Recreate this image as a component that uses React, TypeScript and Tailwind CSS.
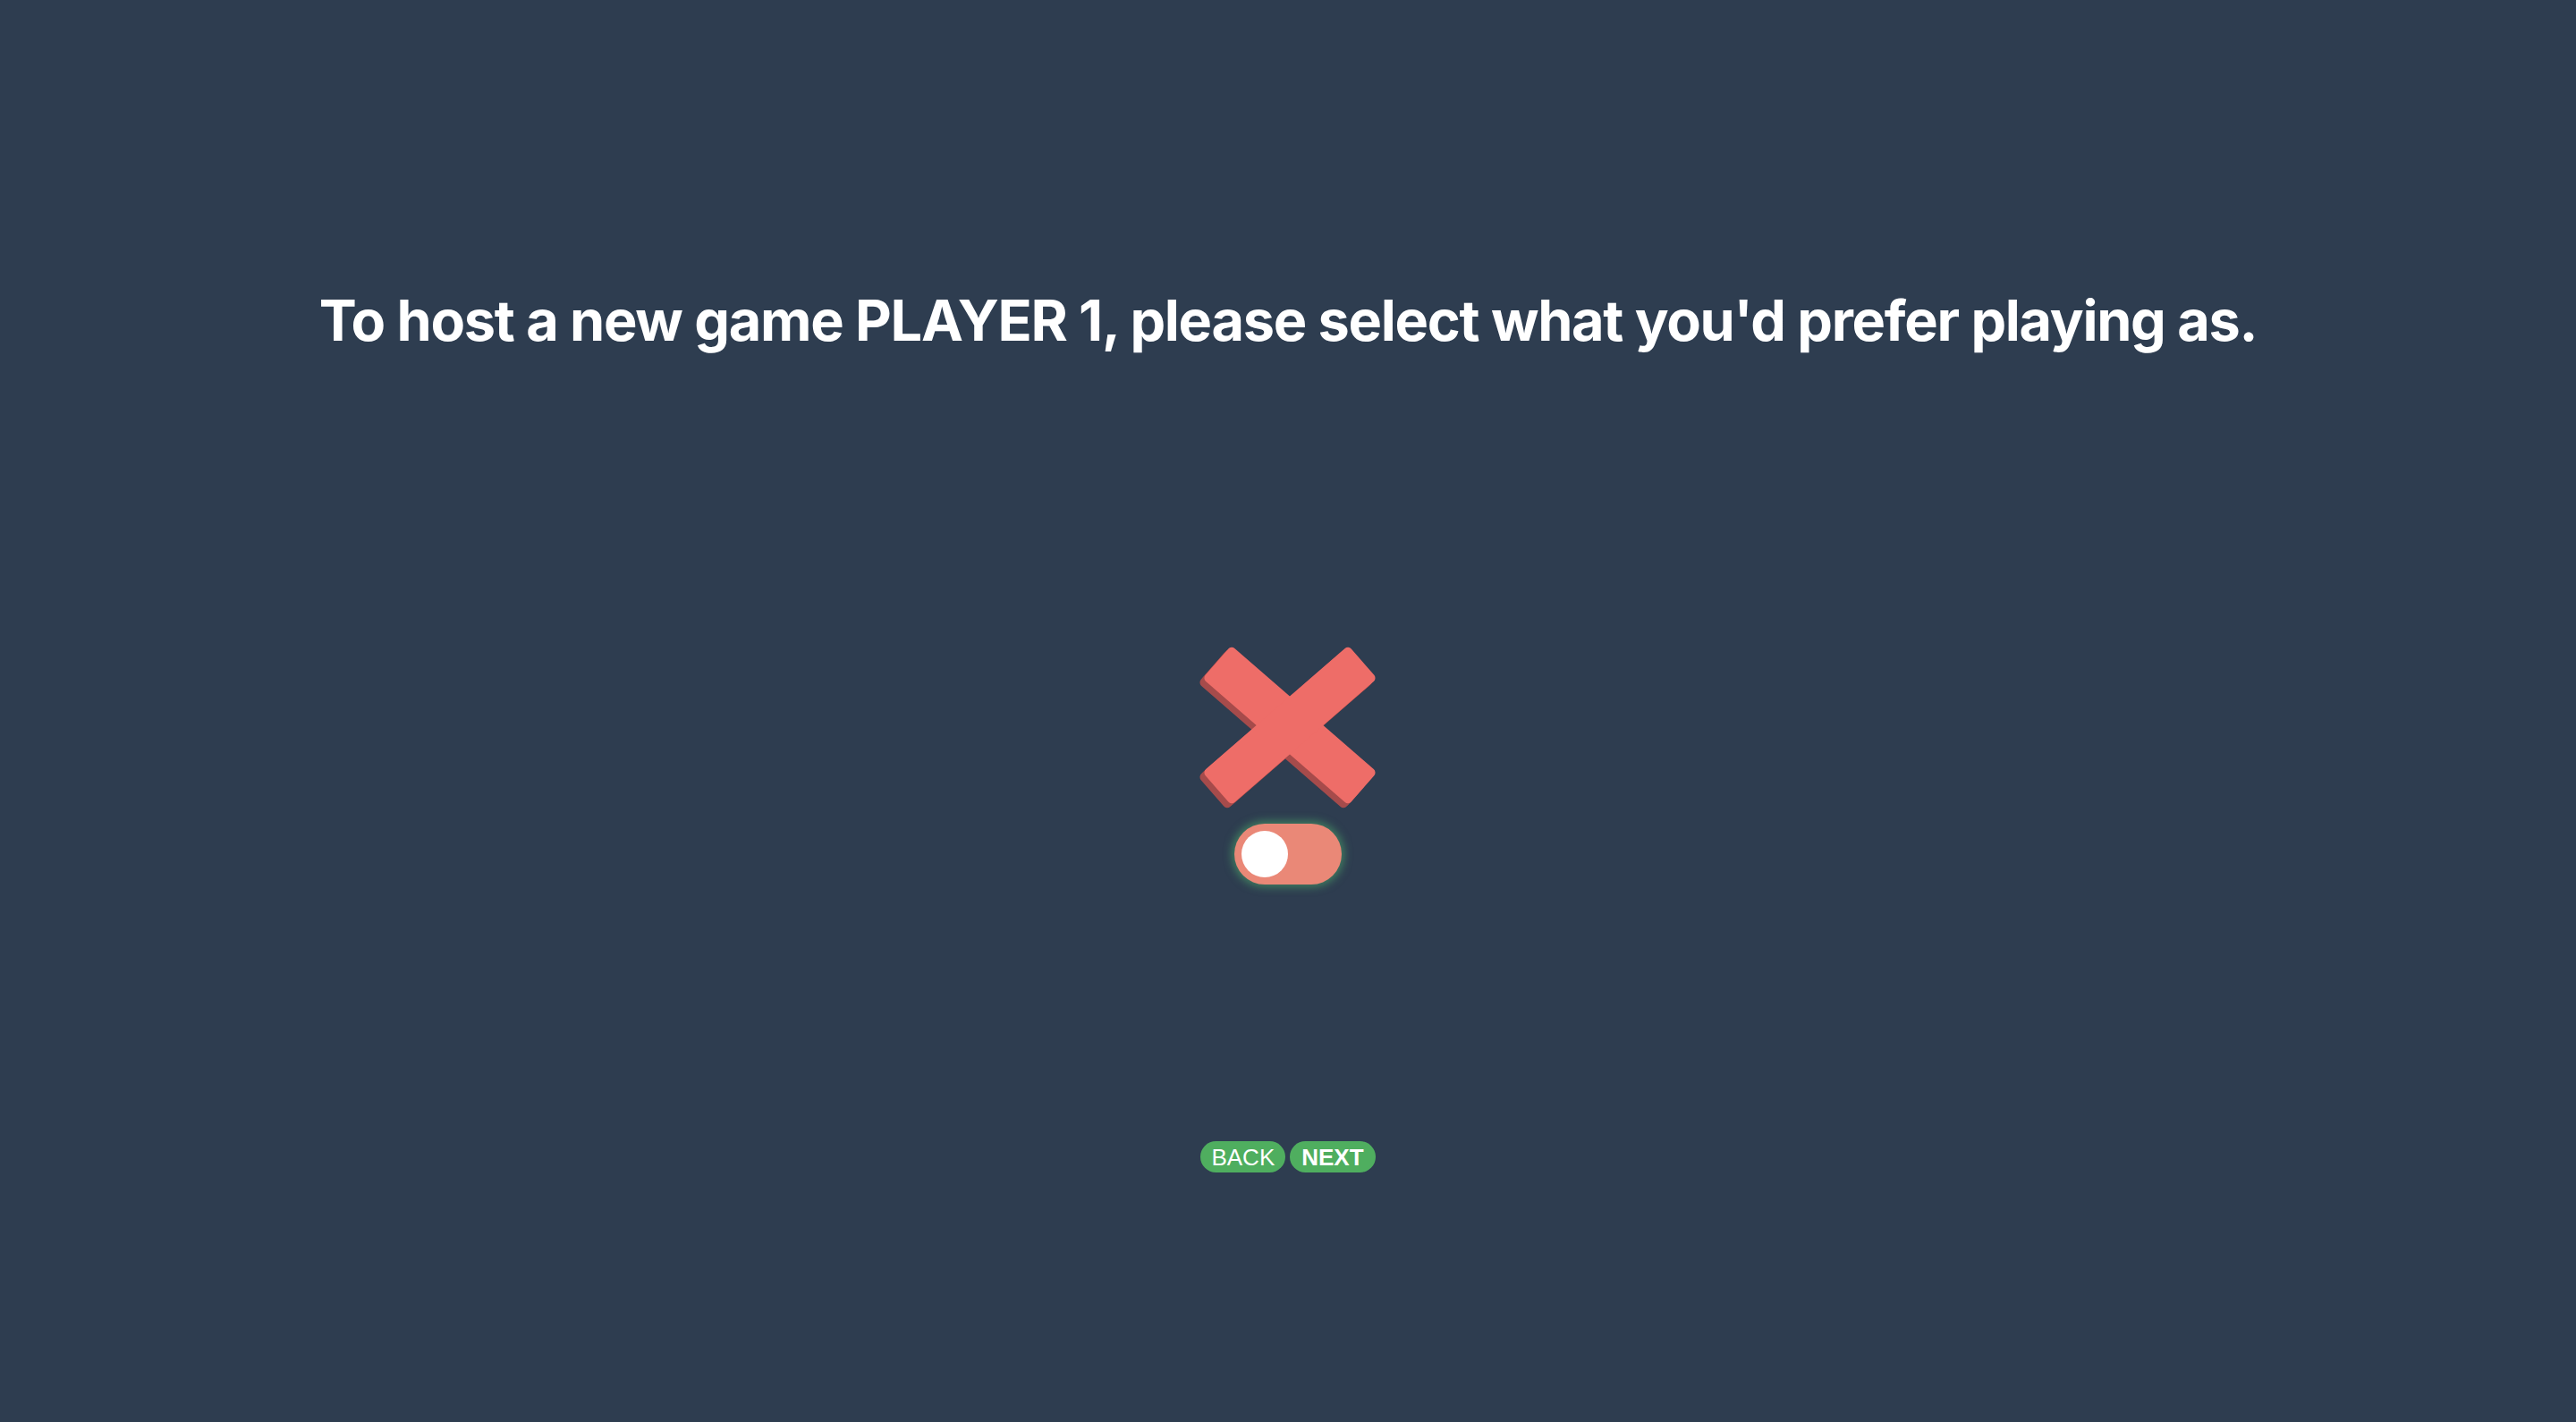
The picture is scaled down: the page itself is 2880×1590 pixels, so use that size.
import { useState } from 'react'

function Cross() {
  // two rounded bars at ~41deg, darker copy shifted down-left for depth
  const bars = (fill: string, dx: number, dy: number) => (
    <g fill={fill} transform={`translate(${107 + dx} ${90 + dy})`}>
      <rect x={-108} y={-24.5} width={216} height={49} rx={5} transform="rotate(41)" />
      <rect x={-108} y={-24.5} width={216} height={49} rx={5} transform="rotate(-41)" />
    </g>
  )
  return (
    <svg width="210" height="190" viewBox="0 0 210 190" className="block">
      {bars('#a64b4b', -3, 3)}
      {bars('#a64b4b', -5, 5)}
      {bars('#ee6d68', 0, 0)}
    </svg>
  )
}

export default function App() {
  const [isO, setIsO] = useState(false)

  return (
    <div className="min-h-screen w-full bg-[#2e3d50] flex flex-col items-center">
      <h1 className="mt-[320px] text-[63px] leading-[76px] font-bold text-white tracking-[-1.3px] font-['Inter','Noto_Sans',sans-serif]">
        To host a new game PLAYER 1, please select what you'd prefer playing as.
      </h1>

      <div className="mt-[325px] flex flex-col items-center">
        <Cross />
        <button
          onClick={() => setIsO(!isO)}
          className="mt-[10px] w-[120px] h-[68px] rounded-full bg-[#ea8877] shadow-[0_0_10px_3px_rgba(80,180,110,0.55)] flex items-center px-[8px]"
        >
          <span className="block w-[52px] h-[52px] rounded-full bg-white" />
        </button>
      </div>

      <div className="mt-[287px] flex gap-[5px] font-['Liberation_Sans',Arial,sans-serif]">
        <button className="h-[35px] px-[12px] rounded-full bg-[#4fae5f] text-white text-[26px] leading-none">
          BACK
        </button>
        <button className="h-[35px] px-[13px] rounded-full bg-[#4fae5f] text-white text-[26px] leading-none font-bold">
          NEXT
        </button>
      </div>
    </div>
  )
}
